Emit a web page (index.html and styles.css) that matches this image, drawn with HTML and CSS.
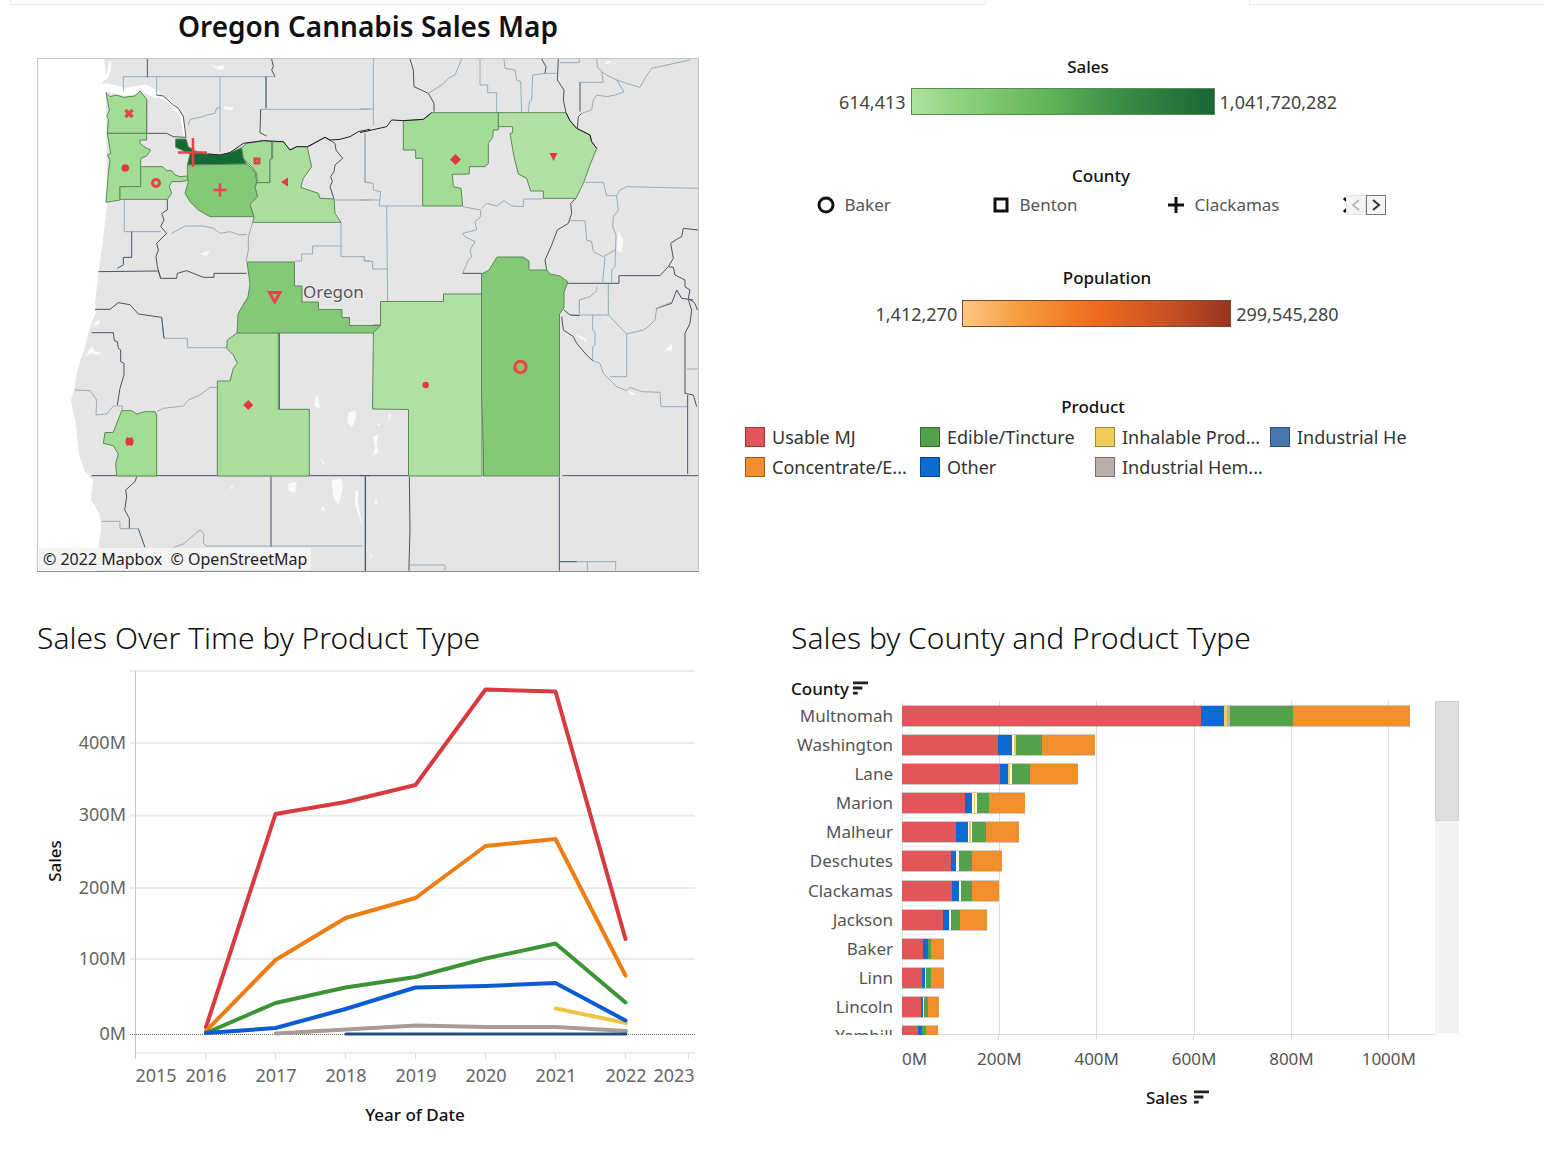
FILE: index.html
```html
<!DOCTYPE html>
<html lang="en">
<head>
<meta charset="utf-8">
<meta name="viewport" content="width=device-width, initial-scale=1">
<title>Oregon Cannabis Sales Map</title>
<link rel="stylesheet" href="styles.css">
</head>
<body>
<header class="topbar"><div class="topbar-main"></div><div class="topbar-side"></div></header>
<main class="dashboard">

<section class="map-panel">
  <h1 class="title">Oregon Cannabis Sales Map</h1>
  <figure class="map">
    <svg class="map-art" viewBox="38 59 660 512" role="img" aria-label="Map of sales by Oregon county">
      <path class="land" d="M104 58 106 75 101 88 106 93 107 205 103 240 99 270 95 302 96 312 91 324 84 350 78 368 74 390 71 400 76 425 79 455 85 472 93 480 91 500 100 515 101 530 98 550 97 573H700V58z"/>
      <g transform="translate(30 50) scale(.3333333)">
        <path class="water wide" d="M205 118 230 112 285 126 345 116 385 136"/>
        <path class="water" d="M385 136 425 160 455 200 466 262M215 40 225 90M240 35 238 60 228 85"/>
        <path class="lake" d="M535 38 560 50 580 45 582 58 565 60zM580 168 610 172 608 180 585 180zM510 612 540 600 530 618zM165 720 185 700 190 705z"/>
        <path class="county" d="M280 125V80H735M380 80V135M570 80V305M708 80V175M475 225 480 208 520 200 530 195 555 190 560 175 570 172M692 178H1020M1005 250V397H1020M283 450V545H392M425 550 465 528 520 528 550 535 570 550 600 545 630 555 650 553M668 517 655 560 655 600 648 635M933 517V620H1003V633H1020M933 588H848V612H815V633H795M915 450H1020"/>
        <path class="line" d="M305 545V622H280V645L262 655M412 448V480L395 490 402 510 392 530 410 550 380 580 385 600 378 620 382 650 392 685M352 27V82M725 27 730 50 725 60 735 80M350 148V250M232 250H410L430 260 468 262M380 135 400 138 430 165 445 175 460 200 468 262M692 178 690 248 710 258M708 80V175M835 290 885 262 915 280 918 300 938 325 915 345 912 365 902 380 907 395 900 410 912 447M205 665 385 663 392 685 440 685 442 670 470 662 520 682 552 682 552 670 650 670"/>
        <path class="g2" d="M228 128 240 140 258 135 280 142 315 138 330 123 350 148 350 250 232 250 235 205 230 200 238 180z"/>
        <path class="g2" d="M232 250H350V270H330V280L345 292 362 300 350 318 332 325V410H270V450L228 457 235 370 240 330 232 315 242 310z"/>
        <path class="g2" d="M332 350H398L410 362 425 362 435 375 450 380 472 378 472 392 450 395 425 395 418 410 425 430 412 448H270V410H332z"/>
        <path class="g5" d="M437 267H468L475 290 500 305 535 312 570 315 600 308 635 293 640 325 650 342 472 345 480 312 437 292z"/>
        <path class="g3" d="M472 345 650 342 665 355 675 365 680 395 675 410 683 440 660 462 672 500H540L505 480 480 455 465 430 475 395 472 378z"/>
        <path class="g2" d="M635 293 650 280 700 272 725 275V325L720 328V398H682L680 370 665 350 640 325z"/>
        <path class="g2b" d="M728 275H760L780 300 800 290H832L838 320 845 350 820 385 812 412 865 430 870 445 912 447 915 490 933 517H668L672 500 660 462 683 440 675 410 682 398H720V328L728 325z"/>
        <path class="river" d="M535 312 570 315 600 308 640 280 700 272 760 275 780 300 800 290 832 290 885 262 900 270 930 268 960 260 985 245 1020 238"/>
      </g>
      <g transform="translate(360 50) scale(.3333333)">
        <path class="county" d="M40 27V225M0 177H42M305 27 285 75 265 85 245 105 205 130M360 27V105H383V128H410V188M432 27 435 55 465 60 470 90 482 95 485 188M505 188 508 155 515 150 518 75 555 70 590 70M600 38H658V27M710 27 712 50 725 65 740 75 770 90 792 125 765 135 740 140 710 135 700 150 695 180 665 190M660 97H730L725 65M770 90 800 100 840 112 855 85 875 55 990 30M15 250V397L40 400V420L62 425 58 468H185M0 450H60M80 470 83 755M0 620 12 620 15 632 38 635V657H83M308 470 362 480 362 500 345 515 350 540 308 550 315 560 345 575 330 600 335 620 325 630 308 670M365 475 380 460 410 468 432 452 455 468 490 470V447H550M632 512H675L680 570 695 575 700 605 730 620 765 600M675 397H730L740 437H770L780 420 800 410 1014 415M770 437 775 480 760 500 758 530 768 555 765 650 755 660V697M735 620 728 697M745 700V780M710 710V722L690 740 658 750V780"/>
        <path class="line" d="M150 27 160 60 162 110M162 110 205 130 222 160V185M545 27 558 50 555 70M595 27 592 90 612 120 610 150 618 188M660 185V97M665 190 655 200 652 235M648 445 632 460 635 490 625 520 592 540 575 585 555 630 560 660M308 670H365M625 700H777V677H900L925 650 940 652 945 675 975 690 975 710 990 720 985 745 1005 760 1012 780M925 650 940 625 932 580 950 568 965 560 970 535 1014 540M890 775 935 760 950 720 965 745 1000 750"/>
        <path class="lake" d="M775 540 790 570 785 610 770 600zM735 38 750 30 755 36 740 42z"/>
        <path class="g2" d="M130 212 190 208 215 188H415V240H400L398 262 385 280V340L375 350H328V372L277 373 280 410 303 415 308 468H188V325H167V300H130z"/>
        <path class="g1" d="M415 188H618L630 212 650 235 690 255 695 275 710 295 690 345 670 400 648 445H550V423H512L500 385 475 372 462 320 450 250 458 248V230H415z"/>
        <path class="river" d="M0 248 80 230 95 210 130 212 190 208 215 188M618 188 630 212 650 235 690 255 695 275 710 295"/>
      </g>
      <g transform="translate(30 300) scale(.3333333)">
        <path class="county" d="M395 52 402 115H472V143H590M135 270 180 272 200 300 198 345 230 342 250 318 278 318 275 332M380 335 400 325 460 318 475 300 510 285 540 262 562 262M215 664H270V686H325M430 742 460 732 480 715 510 690 522 700 520 730 530 738H998"/>
        <path class="line" d="M195 28 240 28 265 8 300 14 325 42 395 52 402 115M185 98H250L253 122 262 125 265 145 272 150 272 185 282 190 282 225 270 265 262 315M185 527H1020M320 530 315 545 287 570 290 590 284 630 298 655 298 685M325 686 345 742M723 530V740M1006 530V815M748 98V328"/>
        <path class="lake" d="M855 290 865 282 870 325 855 320zM955 340 975 330 980 350 965 385 952 365zM905 540 935 535 938 565 925 615 910 590zM975 575 985 570 985 615 997 680 975 615zM775 550 800 545 795 578 775 572zM880 618 885 632 872 632zM868 468 887 495 880 493zM602 560 610 555 606 572zM190 70 205 60 212 68 195 78zM165 170 185 138 195 155 215 155 205 165 185 160z"/>
        <path class="g2b" d="M622 98H745V328H838V528H562V243H600L610 205 622 190 610 165 590 145 592 120z"/>
        <path class="g2" d="M275 332H305L320 342 345 335H375L380 345V528H260L257 490 265 462 250 437 220 430 225 398 250 397z"/>
      </g>
      <g transform="translate(360 300) scale(.3333333)">
        <path class="county" d="M658 0V45M630 45H745V0M745 45 800 102V230H750M800 102 850 90 865 80 885 60 890 25 938 5M698 45 698 90 705 95 705 135 698 140 698 182M698 182 720 190 730 220 770 260 800 272 810 262 845 275 900 277 903 320H983M980 207H1014M255 812V795H150M600 785H767V812M682 785V812"/>
        <path class="line" d="M612 30 630 45 658 47M605 50 610 90 640 110 650 130 680 165 698 182M985 0 995 30 990 70 975 100V280L1000 285 1010 320M983 285V522M0 527H145M607 527H1014M16 530V812M148 530 150 690 147 795V812M598 530V812M600 785H650"/>
        <path class="lake" d="M650 102 680 118 678 124 655 112zM935 130 937 150 920 152 908 165 918 148zM38 410 55 405 50 430 55 455 40 468 45 440zM85 345 95 337 88 360zM50 370 62 372 55 378zM48 590 54 612 44 610zM30 765 38 768 32 775zM800 270 828 282 815 285z"/>
      </g>
      <path class="g1" d="M380.500 301.500H443.500V294H482V476H408.500V409.500L372.500 409 373.500 325H380.500z"/>
      <path class="g3" d="M247 262H294.500V286H302V302H318.500V309.500H342V317.500H349.500V325.500H380.500L373 333H237L238 314 243 305 248 297 250 284z"/>
      <path class="g3" d="M481.500 274 489 270 497 257H523L529 261V270H547L550 274 560 276 568 282 564 292V308L559.500 314V476H483.500V452L481.500 395z"/>

      <g class="mark-line">
        <path d="m125.500 110 7 7m0-7-7 7" stroke-width="3.500"/>
        <path d="M220 183.500v13M213.500 190h13" stroke-width="2.500"/>
        <path d="M193 138v29M178 152.500h29" stroke-width="2.500"/>
        <circle cx="156" cy="183" r="3.500" stroke-width="3"/>
        <circle cx="520.500" cy="367" r="5.700" stroke-width="3"/>
        <path d="M269.500 292.500h10.500L274.700 302z" stroke-width="3"/>
        <path d="M255 159h4v4h-4z" stroke-width="3"/>
      </g>
      <circle class="mark-ring" cx="520.500" cy="367" r="3.500"/>
      <path class="mark" d="M121.500 168a3.800 3.800 0 1 0 7.600 0 3.800 3.800 0 1 0-7.600 0M422.500 385a3.200 3.200 0 1 0 6.400 0 3.200 3.200 0 1 0-6.400 0M281 182l7-4.500v9zM455.500 154l5.500 5.500-5.500 5.500-5.500-5.500zM248.300 400l5 5-5 5-5-5zM549.500 153h8l-4 8zM125.500 440l1.500-3 2.500 1 2.500-1 1.500 3v3l-1.500 3-2.500-1-2.500 1-1.500-3z"/>
      <text class="state" x="303" y="298">Oregon</text>
    </svg>
    <figcaption class="credit">© 2022 Mapbox&nbsp; © OpenStreetMap</figcaption>
  </figure>
</section>

<section class="legends">
  <div class="legend sales-legend">
    <h3 class="legend-title">Sales</h3>
    <div class="ramp-row"><span>614,413</span><div class="ramp ramp-sales"></div><span>1,041,720,282</span></div>
  </div>
  <div class="legend county-legend">
    <h3 class="legend-title">County</h3>
    <div class="shape-row">
      <ul class="shapes">
        <li><svg class="shape" viewBox="0 0 18 18"><circle cx="9" cy="9" r="7"/></svg>Baker</li>
        <li><svg class="shape" viewBox="0 0 18 18"><path d="M3 3h12v12H3z"/></svg>Benton</li>
        <li><svg class="shape" viewBox="0 0 18 18"><path d="M9 1v16M1 9h16"/></svg>Clackamas</li>
        <li><svg class="shape" viewBox="0 0 18 18"><path d="m2 2 14 14M16 2 2 16"/></svg></li>
      </ul>
      <button class="step" type="button" aria-label="Previous counties" disabled><svg viewBox="0 0 18 18"><path d="m12 4-6 5 6 5"/></svg></button>
      <button class="step" type="button" aria-label="Next counties"><svg viewBox="0 0 18 18"><path d="m6 4 6 5-6 5"/></svg></button>
    </div>
  </div>
  <div class="legend population-legend">
    <h3 class="legend-title">Population</h3>
    <div class="ramp-row"><span>1,412,270</span><div class="ramp ramp-population"></div><span>299,545,280</span></div>
  </div>
  <div class="legend product-legend">
    <h3 class="legend-title">Product</h3>
    <ul class="products">
      <li><i class="swatch red"></i>Usable MJ</li>
      <li><i class="swatch orange"></i>Concentrate/E...</li>
      <li><i class="swatch green"></i>Edible/Tincture</li>
      <li><i class="swatch blue"></i>Other</li>
      <li><i class="swatch yellow"></i>Inhalable Prod...</li>
      <li><i class="swatch taupe"></i>Industrial Hem...</li>
      <li><i class="swatch steel"></i>Industrial He</li>
    </ul>
  </div>
</section>

<section class="time-panel">
  <h2 class="heading">Sales Over Time by Product Type</h2>
  <svg class="time-chart" viewBox="37 660 662 480" role="img" aria-label="Sales by year for each product">
    <path class="grid" d="M130 671H695M130 743H695M130 815.500H695M130 888H695M130 959H695M136 1053H695"/>
    <path class="tick" d="M206 1053v6M275.500 1053v6M345.500 1053v6M415.500 1053v6M485.500 1053v6M555.500 1053v6M625.500 1053v6M688.500 1053v6"/>
    <path class="axis" d="M135.500 671V1059"/>
    <path class="zero" d="M130 1034.500H695"/>
    <g class="series">
      <polyline class="s-yellow" points="556,1008.500 626,1023"/>
      <polyline class="s-taupe" points="276,1033.500 346,1029.500 416,1025.500 486,1027 556,1027 626,1031"/>
      <polyline class="s-steel" points="346,1034 626,1034"/>
      <polyline class="s-red" points="206,1027 275.500,814 345.500,802 415.500,785 485.500,689.500 555.500,691.500 625.500,939"/>
      <polyline class="s-orange" points="206,1031 275.500,960 345.500,918 415.500,898 485.500,846 555.500,839 625.500,975.500"/>
      <polyline class="s-green" points="206,1033 275.500,1003 345.500,987.500 415.500,977 485.500,958.500 555.500,943.500 625.500,1002.500"/>
      <polyline class="s-blue" points="206,1033 275.500,1028 345.500,1009 415.500,987.500 485.500,986 555.500,983 625.500,1020.500"/>
    </g>
    <g class="labels end">
      <text x="126" y="749">400M</text><text x="126" y="821">300M</text><text x="126" y="894">200M</text><text x="126" y="965">100M</text><text x="126" y="1040">0M</text>
    </g>
    <g class="labels mid">
      <text x="156" y="1082">2015</text><text x="206" y="1082">2016</text><text x="276" y="1082">2017</text><text x="346" y="1082">2018</text><text x="416" y="1082">2019</text><text x="486" y="1082">2020</text><text x="556" y="1082">2021</text><text x="626" y="1082">2022</text><text x="674" y="1082">2023</text>
    </g>
    <g class="names mid">
      <text x="415" y="1121">Year of Date</text>
      <text transform="translate(61 861) rotate(-90)">Sales</text>
    </g>
  </svg>
</section>

<section class="county-panel">
  <h2 class="heading">Sales by County and Product Type</h2>
  <div class="column-name">County <svg class="sort" viewBox="0 0 16 14"><path d="M0 1.500h16M0 7h10M0 12.500h5"/></svg></div>
  <div class="bar-chart">
    <div class="viewport">
      <div class="gridlines"><i></i><i></i><i></i><i></i><i></i></div>
      <ol class="rows">
        <li><span>Multnomah</span><div class="bar" style="width:95.3%"><i class="red" style="flex:298"></i><i class="blue" style="flex:23"></i><i class="yellow" style="flex:3"></i><i class="taupe" style="flex:3"></i><i class="green" style="flex:63"></i><i class="orange" style="flex:117"></i></div></li>
        <li><span>Washington</span><div class="bar" style="width:36.3%"><i class="red" style="flex:96"></i><i class="blue" style="flex:14"></i><i class="pale" style="flex:2"></i><i class="yellow" style="flex:2"></i><i class="green" style="flex:26"></i><i class="orange" style="flex:54"></i></div></li>
        <li><span>Lane</span><div class="bar" style="width:33.1%"><i class="red" style="flex:98"></i><i class="blue" style="flex:8"></i><i class="yellow" style="flex:2"></i><i class="pale" style="flex:2"></i><i class="green" style="flex:18"></i><i class="orange" style="flex:48"></i></div></li>
        <li><span>Marion</span><div class="bar" style="width:23.1%"><i class="red" style="flex:63"></i><i class="blue" style="flex:7"></i><i class="pale" style="flex:2"></i><i class="yellow" style="flex:1"></i><i class="pale" style="flex:2"></i><i class="green" style="flex:12"></i><i class="orange" style="flex:36"></i></div></li>
        <li><span>Malheur</span><div class="bar" style="width:22%"><i class="red" style="flex:54"></i><i class="blue" style="flex:12"></i><i class="pale" style="flex:1"></i><i class="yellow" style="flex:2"></i><i class="pale" style="flex:1"></i><i class="green" style="flex:14"></i><i class="orange" style="flex:33"></i></div></li>
        <li><span>Deschutes</span><div class="bar" style="width:18.8%"><i class="red" style="flex:49"></i><i class="blue" style="flex:5"></i><i class="pale" style="flex:3"></i><i class="green" style="flex:13"></i><i class="orange" style="flex:30"></i></div></li>
        <li><span>Clackamas</span><div class="bar" style="width:18.2%"><i class="red" style="flex:50"></i><i class="blue" style="flex:7"></i><i class="pale" style="flex:2"></i><i class="green" style="flex:11"></i><i class="orange" style="flex:27"></i></div></li>
        <li><span>Jackson</span><div class="bar" style="width:16%"><i class="red" style="flex:41"></i><i class="blue" style="flex:6"></i><i class="pale" style="flex:2"></i><i class="green" style="flex:9"></i><i class="orange" style="flex:27"></i></div></li>
        <li><span>Baker</span><div class="bar" style="width:7.8%"><i class="red" style="flex:21"></i><i class="blue" style="flex:5"></i><i class="green" style="flex:3"></i><i class="orange" style="flex:12"></i></div></li>
        <li><span>Linn</span><div class="bar" style="width:7.8%"><i class="red" style="flex:20"></i><i class="blue" style="flex:3"></i><i class="pale" style="flex:1"></i><i class="green" style="flex:5"></i><i class="orange" style="flex:12"></i></div></li>
        <li><span>Lincoln</span><div class="bar" style="width:7%"><i class="red" style="flex:19"></i><i class="blue" style="flex:2"></i><i class="pale" style="flex:1"></i><i class="green" style="flex:4"></i><i class="orange" style="flex:11"></i></div></li>
        <li><span>Yamhill</span><div class="bar" style="width:6.7%"><i class="red" style="flex:16"></i><i class="blue" style="flex:4"></i><i class="green" style="flex:4"></i><i class="orange" style="flex:12"></i></div></li>
      </ol>
    </div>
    <div class="scrollbar"><div class="thumb"></div></div>
    <div class="x-axis">
      <div class="ticks"><i></i><i></i><i></i><i></i><i></i></div>
      <div class="x-labels"><span>0M</span><span>200M</span><span>400M</span><span>600M</span><span>800M</span><span>1000M</span></div>
      <div class="x-name">Sales <svg class="sort" viewBox="0 0 16 14"><path d="M0 1.500h16M0 7h10M0 12.500h5"/></svg></div>
    </div>
  </div>
</section>

</main>
</body>
</html>
```
FILE: styles.css
```css
* { box-sizing: border-box; }

body {
  margin: 0;
  background: #fff;
  color: #111;
  font: 17px/24px "Noto Sans", "Open Sans", sans-serif;
}

h1, h2, h3, ul, ol, figure { margin: 0; padding: 0; }
ul, ol { list-style: none; }

/* Strip above the dashboard */
.topbar {
  display: flex;
  justify-content: space-between;
  height: 5px;
  padding-left: 10px;
}
.topbar-main, .topbar-side { border: 1px solid #ececec; border-top: 0; }
.topbar-main { width: 63.6%; }
.topbar-side { width: 19.2%; border-right: 0; }

.dashboard {
  display: grid;
  grid-template-columns: 662fr 799fr;
  gap: 46px;
  padding: 2px 0 20px 37px;
}

/* Map */
.title {
  margin-bottom: 13px;
  font-size: 28px;
  line-height: 38px;
  font-weight: 600;
  text-align: center;
}
.map {
  position: relative;
  border: 1px solid #c4c4c4;
  border-bottom-color: #8a8a8a;
}
.map-art { display: block; width: 100%; }
.map-art path { vector-effect: non-scaling-stroke; }
.land { fill: #e5e5e5; }
.water { fill: none; stroke: #fff; stroke-width: 3px; }
.wide { stroke-width: 8px; }
.lake { fill: #fafafa; }
.county, .line, .river { fill: none; stroke: #9cabb6; stroke-width: 1px; }
.line { stroke: #4a5560; }
.river { stroke: #222; }
.g1, .g2, .g2b, .g3, .g5 { stroke: #5d8a58; stroke-width: 1px; }
.g1 { fill: #b1e0a4; }
.g2 { fill: #a3dc95; }
.g2b { fill: #abde9d; }
.g3 { fill: #83c977; }
.g5 { fill: #146a35; }
.mark { fill: #e5383d; }
.mark-line { fill: none; stroke: #e8434a; }
.mark-ring { fill: none; stroke: #e0963c; stroke-width: 1px; }
.state {
  fill: #555;
  stroke: #eee;
  stroke-width: 2px;
  paint-order: stroke;
  font-size: 17px;
}
.credit {
  position: absolute;
  left: 1px;
  bottom: 1px;
  padding: 0 4px;
  background: #f4f4f4;
  color: #222;
  font-size: 16px;
  line-height: 22px;
}

/* Legends */
.legends { width: 696px; max-width: 100%; padding-top: 48px; }
.legend-title { font-size: 17px; line-height: 24px; font-weight: 500; text-align: center; }
.sales-legend { padding-right: 10px; }
.county-legend { padding-left: 16px; margin-top: 49px; }
.population-legend { padding-left: 28px; margin-top: 49px; }
.product-legend { margin-top: 68px; }
.ramp-row {
  display: flex;
  justify-content: center;
  align-items: center;
  gap: 5px;
  margin-top: 10px;
  color: #444;
  font-size: 18px;
}
.sales-legend .ramp-row { margin-top: 9px; }
.ramp { height: 27px; border: 1px solid #5c8a55; }
.ramp-sales {
  width: 304px;
  background: linear-gradient(90deg, #aee29f, #8bd07c 18%, #62b358 45%, #3b8c46 70%, #1b6636);
}
.ramp-population {
  width: 269px;
  border-color: #7a4a35;
  background: linear-gradient(90deg, #ffc685, #f59b3c 22%, #ee6a1e 50%, #cb5424 75%, #983420);
}
.shape-row { display: flex; align-items: center; margin: 5px auto 0; width: 569px; max-width: 100%; }
.shapes { display: flex; width: 529px; overflow: hidden; color: #555; }
.shapes li { display: flex; flex: none; align-items: center; gap: 10px; width: 175px; white-space: nowrap; }
.shape { width: 18px; height: 18px; fill: none; stroke: #111; stroke-width: 3px; }
.step {
  width: 20px;
  height: 20px;
  padding: 0;
  border: 1px solid #777;
  background: #f4f4f4;
}
.step svg { display: block; width: 18px; height: 18px; fill: none; stroke: #333; stroke-width: 2px; }
.step:disabled { border-color: #e2e2e2; }
.step:disabled svg { stroke: #bbb; }
.products {
  display: grid;
  grid-template: repeat(2, 24px) / repeat(4, 175px);
  grid-auto-flow: column;
  row-gap: 6px;
  margin-top: 6px;
  color: #333;
  font-size: 18px;
}
.products li { display: flex; align-items: center; gap: 7px; white-space: nowrap; }
.swatch { flex: none; width: 20px; height: 20px; border: 1px solid rgba(0, 0, 0, .35); }

.red { background: #e15658; }
.orange { background: #f28e2b; }
.green { background: #55a04b; }
.blue { background: #0b6bd3; }
.yellow { background: #f0cc5d; }
.taupe { background: #b9aeaa; }
.steel { background: #4777ac; }
.pale { background: #fbf6e6; }

/* Line chart */
.heading { font-size: 30px; line-height: 40px; font-weight: 300; }
.time-chart { display: block; width: 100%; margin-top: 2px; }
.grid { fill: none; stroke: #ebebeb; stroke-width: 2px; }
.tick { stroke: #ddd; }
.axis { stroke: #c4c4c4; }
.zero { stroke: #666; stroke-dasharray: 1 1; }
.series { fill: none; stroke-width: 4px; stroke-linecap: round; stroke-linejoin: round; }
.s-red { stroke: #d93a40; }
.s-orange { stroke: #ee7d14; }
.s-green { stroke: #3d9436; }
.s-blue { stroke: #0a5cd0; }
.s-yellow { stroke: #eec543; }
.s-taupe { stroke: #a89b97; }
.s-steel { stroke: #1f4e80; stroke-width: 3px; }
.labels { fill: #666; font-size: 18px; }
.names { fill: #111; font-size: 17px; font-weight: 500; }
.end { text-anchor: end; }
.mid { text-anchor: middle; }

/* Bar chart */
.county-panel { padding: 0 85px 0 46px; }
.column-name { margin-top: 19px; font-weight: 500; }
.sort { width: 15px; height: 14px; fill: none; stroke: #222; stroke-width: 3px; }
.bar-chart { display: grid; grid-template-columns: 111px 1fr 24px; }
.viewport {
  grid-column: 1 / 3;
  display: grid;
  grid-template-columns: 111px 1fr;
  height: 334px;
  overflow: hidden;
}
.gridlines, .ticks { display: flex; }
.gridlines { grid-area: 1 / 2; border-left: 1px solid #eee; border-bottom: 1px solid #ddd; height: 334px; }
.gridlines i, .ticks i { width: 18.27%; border-right: 1px solid #ddd; }
.rows { grid-area: 1 / 1 / 2 / 3; display: grid; grid-template-rows: repeat(12, 1fr); height: 350px; }
.rows li { display: grid; grid-template-columns: 102px 1fr; column-gap: 9px; align-items: center; }
.rows span { color: #555; text-align: right; }
.bar { display: flex; height: 22px; border: 1px solid rgba(0, 0, 0, .2); border-width: 1px 0; }
.scrollbar { height: 332px; background: #f3f3f3; }
.thumb { height: 36%; background: #dedede; border: 1px solid #d2d2d2; }
.x-axis { grid-column: 2; }
.ticks { height: 5px; }
.x-labels { display: flex; margin-top: 7px; color: #555; }
.x-labels span { flex: none; width: 18.27%; text-align: center; }
.x-labels span:first-child { width: 9.13%; text-align: left; }
.x-name { margin-top: 15px; padding-left: 18px; text-align: center; font-weight: 500; }
.x-name .sort { margin-left: 2px; }
```
